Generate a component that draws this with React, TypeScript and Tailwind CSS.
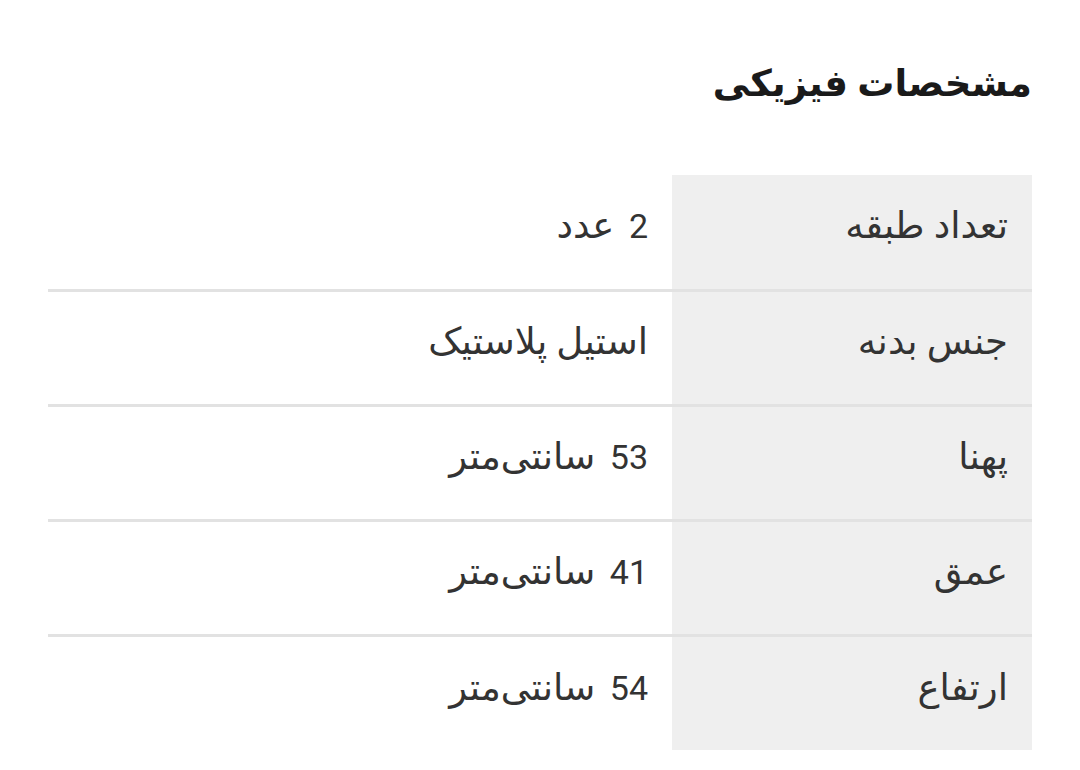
const rows = [
  { label: 'تعداد طبقه', num: '2', unit: 'عدد' },
  { label: 'جنس بدنه', num: '', unit: 'استیل پلاستیک' },
  { label: 'پهنا', num: '53', unit: 'سانتی‌متر' },
  { label: 'عمق', num: '41', unit: 'سانتی‌متر' },
  { label: 'ارتفاع', num: '54', unit: 'سانتی‌متر' },
];

const App = () => {
  return (
    <div
      dir="rtl"
      className="min-h-screen bg-white px-12 pt-[58px]"
      style={{ fontFamily: 'Roboto, "DejaVu Sans", sans-serif' }}
    >
      <h2 className="text-[37px] font-bold leading-[52px] text-[#1a1a1a]">مشخصات فیزیکی</h2>

      <table className="mt-[65px] w-full border-collapse">
        <tbody>
          {rows.map((row, i) => (
            <tr key={row.label} className={i < rows.length - 1 ? 'border-b-[3px] border-[#e2e2e2]' : ''}>
              <td className="h-[115px] w-[360px] bg-[#efefef] pr-6 pb-3 text-right align-middle text-[37px] leading-none text-[#333]">
                {row.label}
              </td>
              <td className="h-[115px] pr-6 pb-3 text-right align-middle text-[37px] leading-none text-[#333]">
                {row.num && <span className="ml-[6px] text-[34px]">{row.num} </span>}
                <span className={row.num ? '' : 'tracking-[1px]'}>{row.unit}</span>
              </td>
            </tr>
          ))}
        </tbody>
      </table>
    </div>
  );
};

export default App;
